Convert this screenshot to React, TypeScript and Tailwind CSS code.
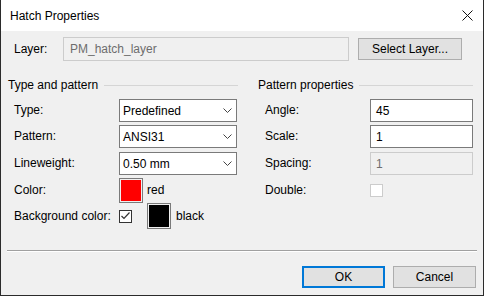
import { ReactNode } from 'react';

const Chevron = () => (
  <svg width="9" height="6" viewBox="0 0 9 6" className="mr-[4px]">
    <polyline points="0.5,0.5 4.5,4.5 8.5,0.5" fill="none" stroke="#444" strokeWidth="1" />
  </svg>
);

const Combo = ({ value }: { value: string }) => (
  <div className="w-[118px] h-[23px] border border-[#7a7a7a] bg-white flex items-center justify-between pl-[3px]">
    <span>{value}</span>
    <Chevron />
  </div>
);

const TextBox = ({ value, disabled }: { value: string; disabled?: boolean }) => (
  <div
    className={
      disabled
        ? 'w-[103px] h-[23px] border border-[#cccccc] bg-[#f0f0f0] text-[#6d6d6d] flex items-center pl-[5px]'
        : 'w-[103px] h-[23px] border border-[#7a7a7a] bg-white flex items-center pl-[5px]'
    }
  >
    {value}
  </div>
);

const GroupHeading = ({ title }: { title: string }) => (
  <div className="flex items-center h-[16px]">
    <span className="leading-[16px]">{title}</span>
    <div className="flex-1 h-px bg-[#d5d5d5] ml-[6px]" />
  </div>
);

const Row = ({ label, h, children, labelW }: { label: string; h: string; children: ReactNode; labelW: string }) => (
  <div className={`flex items-start ${h}`}>
    <span className={`${labelW} leading-[23px]`}>{label}</span>
    {children}
  </div>
);

export default function App() {
  return (
    <div
      className="w-[484px] h-[296px] flex flex-col border-l border-r border-b border-[#2b2b2b] bg-[#f0f0f0] text-[12px] text-black overflow-hidden"
      style={{ fontFamily: '"Liberation Sans", Arial, sans-serif' }}
    >
      {/* title bar */}
      <div className="h-[31px] bg-white flex items-center justify-between pl-[9px] pr-[10px] shrink-0">
        <span className="text-[12px]">Hatch Properties</span>
        <svg width="11" height="11" viewBox="0 0 11 11">
          <path d="M0.5 0.5 L10.5 10.5 M10.5 0.5 L0.5 10.5" stroke="#111" strokeWidth="1" />
        </svg>
      </div>

      {/* layer row */}
      <div className="flex items-center pt-[6px] pl-[13px] h-[30px]">
        <span className="w-[49px]">Layer:</span>
        <div className="w-[286px] h-[24px] border border-[#cccccc] bg-[#f0f0f0] text-[#6d6d6d] flex items-center pl-[6px]">
          PM_hatch_layer
        </div>
        <button className="ml-[9px] w-[104px] h-[22px] border border-[#adadad] bg-[#e1e1e1]">Select Layer...</button>
      </div>

      {/* groups */}
      <div className="flex pt-[16px] pl-[7px]">
        <div className="w-[230px]">
          <GroupHeading title="Type and pattern" />
          <div className="pl-[6px] pt-[6px]">
            <Row label="Type:" h="h-[26px]" labelW="w-[105px]">
              <Combo value="Predefined" />
            </Row>
            <Row label="Pattern:" h="h-[27px]" labelW="w-[105px]">
              <Combo value="ANSI31" />
            </Row>
            <Row label="Lineweight:" h="h-[25px]" labelW="w-[105px]">
              <Combo value="0.50 mm" />
            </Row>
            <div className="flex items-center h-[26px]">
              <span className="w-[105px]">Color:</span>
              <div className="w-[24px] h-[25px] border border-[#7a7a7a] p-[1px] bg-[#f0f0f0]">
                <div className="w-full h-full bg-[#ff0000]" />
              </div>
              <span className="ml-[4px]">red</span>
            </div>
            <div className="flex items-center h-[26px]">
              <span className="w-[105px]">Background color:</span>
              <div className="w-[13px] h-[13px] border border-[#333333] bg-white flex items-center justify-center">
                <svg width="9" height="8" viewBox="0 0 9 8">
                  <polyline points="0.5,4 3,6.5 8.5,0.5" fill="none" stroke="#333" strokeWidth="1.2" />
                </svg>
              </div>
              <div className="ml-[15px] w-[24px] h-[26px] border border-[#7a7a7a] p-[1px] bg-[#f0f0f0]">
                <div className="w-full h-full bg-black" />
              </div>
              <span className="ml-[5px]">black</span>
            </div>
          </div>
        </div>

        <div className="w-[215px] ml-[20px]">
          <GroupHeading title="Pattern properties" />
          <div className="pl-[7px] pt-[6px]">
            <Row label="Angle:" h="h-[26px]" labelW="w-[105px]">
              <TextBox value="45" />
            </Row>
            <Row label="Scale:" h="h-[27px]" labelW="w-[105px]">
              <TextBox value="1" />
            </Row>
            <Row label="Spacing:" h="h-[25px]" labelW="w-[105px]">
              <TextBox value="1" disabled />
            </Row>
            <div className="flex items-center h-[26px]">
              <span className="w-[105px]">Double:</span>
              <div className="w-[13px] h-[13px] border border-[#cccccc] bg-white" />
            </div>
          </div>
        </div>
      </div>

      {/* separator + buttons */}
      <div className="mt-auto px-[6px] pb-[7px]">
        <div className="h-px bg-[#a0a0a0] border-b border-white box-content" />
        <div className="flex justify-end gap-[8px] pt-[14px] pr-[1px]">
          <button className="w-[83px] h-[22px] border-2 border-[#0078d7] bg-[#e1e1e1]">OK</button>
          <button className="w-[83px] h-[22px] border border-[#adadad] bg-[#e1e1e1]">Cancel</button>
        </div>
      </div>
    </div>
  );
}
